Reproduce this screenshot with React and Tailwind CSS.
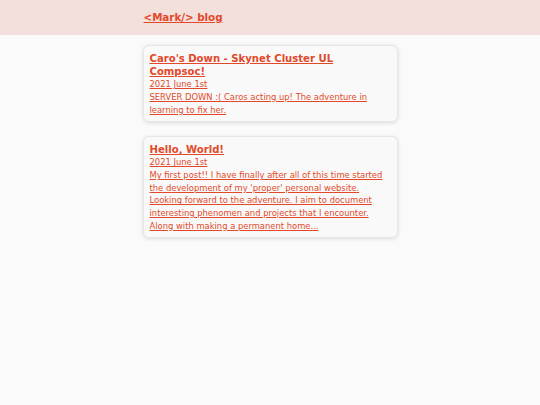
const posts = [
  {
    title: "Caro's Down - Skynet Cluster UL Compsoc!",
    date: '2021 June 1st',
    excerpt: 'SERVER DOWN :( Caros acting up! The adventure in learning to fix her.',
  },
  {
    title: 'Hello, World!',
    date: '2021 June 1st',
    excerpt:
      "My first post!! I have finally after all of this time started the development of my 'proper' personal website. Looking forward to the adventure. I aim to document interesting phenomen and projects that I encounter. Along with making a permanent home...",
  },
];

export default function App() {
  return (
    <div className="min-h-[405px] bg-[#fafafa] text-[#e2492a]" style={{ fontFamily: '"DejaVu Sans", sans-serif' }}>
      <header className="h-[35px] bg-[#f3dfdc] flex items-center pb-[4px]">
        <div className="w-[255px] mx-auto pl-px">
          <a href="#" className="text-[10.3px] leading-[13px] font-bold underline text-[#e2492a]">
            &lt;Mark/&gt; blog
          </a>
        </div>
      </header>
      <main className="w-[255px] mx-auto pt-[10px] flex flex-col gap-[14px]">
        {posts.map((p) => (
          <a
            key={p.title}
            href="#"
            className="block bg-[#f9f9f9] border border-[#e6e6e6] rounded-[6px] shadow-[0_1px_4px_rgba(0,0,0,0.12)] pl-[6px] pr-[9px] pt-[6px] pb-[5px] underline"
          >
            <h2 className="text-[10.1px] leading-[13px] font-bold">{p.title}</h2>
            <p className="text-[8.4px] leading-[13px]">{p.date}</p>
            <p className="text-[8.4px] leading-[12.6px]">{p.excerpt}</p>
          </a>
        ))}
      </main>
    </div>
  );
}
